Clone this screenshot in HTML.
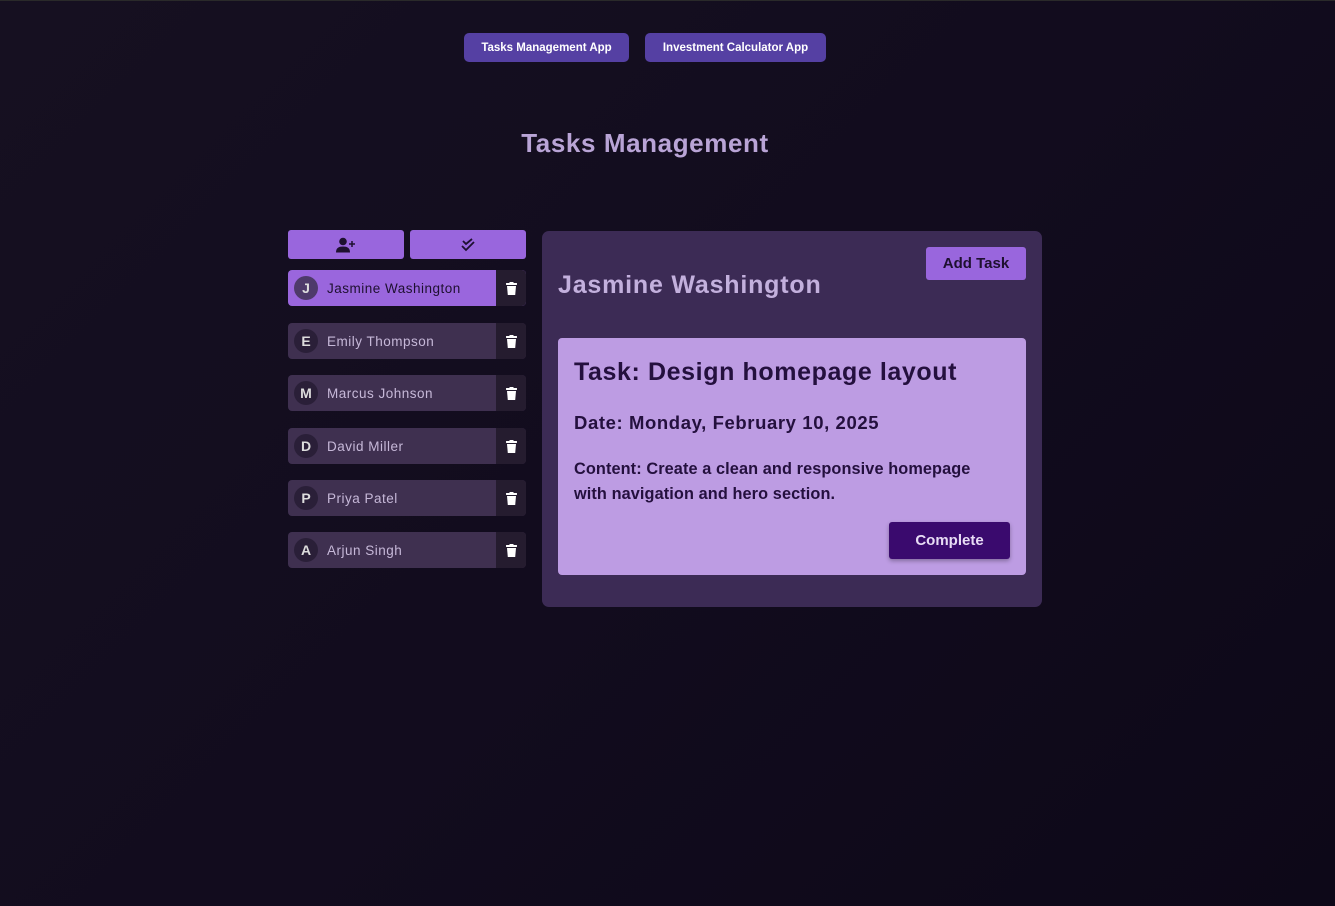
<!DOCTYPE html>
<html><head><meta charset="utf-8"><style>
*{margin:0;padding:0;box-sizing:border-box}
body{width:1335px;height:906px;overflow:hidden;background:linear-gradient(135deg,#161021 0%,#120c1e 50%,#0d0818 100%);font-family:"Liberation Sans",sans-serif;position:relative}
.abs{position:absolute}
.nav{top:33px;height:29px;background:#5540a3;color:#fff;font-weight:bold;font-size:11.5px;border-radius:5px;display:flex;align-items:center;justify-content:center}
h1{position:absolute;left:0;width:1290px;text-align:center;top:128px;font-size:26px;color:#b9a4d6;letter-spacing:0.6px}
.tb{top:230px;width:116px;height:29px;background:#9966dd;border-radius:3px;display:flex;align-items:center;justify-content:center}
.row{left:288px;width:238px;height:36px;border-radius:4px;overflow:hidden;display:flex;background:#3f3050}
.row .n{width:208px;display:flex;align-items:center;color:#c6b8d8;font-size:13.5px;letter-spacing:0.5px}
.row .av{width:24px;height:24px;border-radius:50%;background:#2a1f38;margin:0 9px 0 6px;display:flex;align-items:center;justify-content:center;color:#ddd;font-weight:bold;font-size:14px;letter-spacing:0}
.row .t{width:30px;background:#251c2f;display:flex;align-items:center;justify-content:center}
.row.act{background:#9a66dd}
.row.act .n{color:#1e1030}
.row.act .av{background:#4e3a6a}
.panel{left:542px;top:231px;width:500px;height:376px;background:#3c2b55;border-radius:7px}
.card{left:558px;top:338px;width:468px;height:237px;background:#bd9ce3;border-radius:4px;color:#24103e}
</style></head><body>
<div class="abs" style="left:0;top:0;width:1335px;height:1px;background:#2a2a2a"></div>
<div class="abs nav" style="left:464px;width:165px">Tasks Management App</div>
<div class="abs nav" style="left:645px;width:181px">Investment Calculator App</div>
<h1>Tasks Management</h1>
<div class="abs tb" style="left:288px"><svg width="20" height="16" viewBox="0 0 20 16"><circle cx="7" cy="4.5" r="3.8" fill="#1e1030"/><path d="M0 15.5c0-4.5 2.5-6 7-6s7 1.5 7 6z" fill="#1e1030"/><path d="M16 4v6M13 7h6" stroke="#1e1030" stroke-width="1.5"/></svg></div>
<div class="abs tb" style="left:410px"><svg width="14" height="14" viewBox="0 0 14 14" fill="none" stroke="#1e1030" stroke-width="1.8"><path d="M2 3l3 3 6-5"/><path d="M1 8l4 4 8-8"/></svg></div>
<div class="abs row act" style="top:270px"><div class="n"><div class="av">J</div>Jasmine Washington</div><div class="t"><svg width="11" height="13" viewBox="0 0 11 13" fill="#fff"><rect x="0" y="1" width="11" height="2" rx="0.5"/><rect x="3.5" y="0" width="4" height="1.5"/><path d="M1 4h9l-0.8 9H1.8z"/></svg></div></div>
<div class="abs row" style="top:323px"><div class="n"><div class="av">E</div>Emily Thompson</div><div class="t"><svg width="11" height="13" viewBox="0 0 11 13" fill="#fff"><rect x="0" y="1" width="11" height="2" rx="0.5"/><rect x="3.5" y="0" width="4" height="1.5"/><path d="M1 4h9l-0.8 9H1.8z"/></svg></div></div>
<div class="abs row" style="top:375px"><div class="n"><div class="av">M</div>Marcus Johnson</div><div class="t"><svg width="11" height="13" viewBox="0 0 11 13" fill="#fff"><rect x="0" y="1" width="11" height="2" rx="0.5"/><rect x="3.5" y="0" width="4" height="1.5"/><path d="M1 4h9l-0.8 9H1.8z"/></svg></div></div>
<div class="abs row" style="top:428px"><div class="n"><div class="av">D</div>David Miller</div><div class="t"><svg width="11" height="13" viewBox="0 0 11 13" fill="#fff"><rect x="0" y="1" width="11" height="2" rx="0.5"/><rect x="3.5" y="0" width="4" height="1.5"/><path d="M1 4h9l-0.8 9H1.8z"/></svg></div></div>
<div class="abs row" style="top:480px"><div class="n"><div class="av">P</div>Priya Patel</div><div class="t"><svg width="11" height="13" viewBox="0 0 11 13" fill="#fff"><rect x="0" y="1" width="11" height="2" rx="0.5"/><rect x="3.5" y="0" width="4" height="1.5"/><path d="M1 4h9l-0.8 9H1.8z"/></svg></div></div>
<div class="abs row" style="top:532px"><div class="n"><div class="av">A</div>Arjun Singh</div><div class="t"><svg width="11" height="13" viewBox="0 0 11 13" fill="#fff"><rect x="0" y="1" width="11" height="2" rx="0.5"/><rect x="3.5" y="0" width="4" height="1.5"/><path d="M1 4h9l-0.8 9H1.8z"/></svg></div></div>
<div class="abs panel"></div>
<div class="abs" style="left:926px;top:247px;width:100px;height:33px;background:#9966dd;border-radius:3px;display:flex;align-items:center;justify-content:center;font-weight:bold;font-size:15px;color:#1e1030">Add Task</div>
<div class="abs" style="left:558px;top:271px;font-size:25px;font-weight:bold;color:#c3b0dd;letter-spacing:0.8px">Jasmine Washington</div>
<div class="abs card">
<div class="abs" style="left:16px;top:20px;font-size:25px;font-weight:bold;letter-spacing:0.6px">Task: Design homepage layout</div>
<div class="abs" style="left:16px;top:74px;font-size:18.5px;font-weight:bold;letter-spacing:0.6px">Date: Monday, February 10, 2025</div>
<div class="abs" style="left:16px;top:119px;width:428px;font-size:16.3px;font-weight:bold;line-height:25px;letter-spacing:0.1px">Content: Create a clean and responsive homepage with navigation and hero section.</div>
<div class="abs" style="left:331px;top:184px;width:121px;height:37px;background:#3a0a6e;border-radius:3px;color:#e8dcf5;font-weight:bold;font-size:15px;display:flex;align-items:center;justify-content:center;box-shadow:0 2px 4px rgba(0,0,0,.3)">Complete</div>
</div>
</body></html>
